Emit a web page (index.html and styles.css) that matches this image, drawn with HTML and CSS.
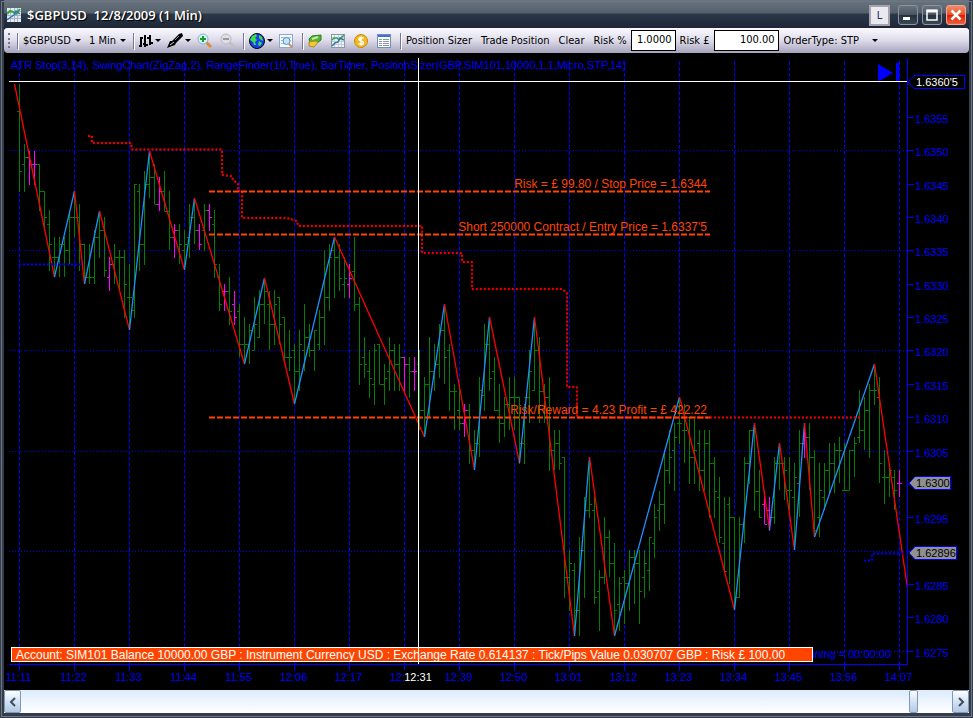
FILE: index.html
```html
<!DOCTYPE html>
<html lang="en">

<head>
    <meta charset="utf-8">
    <title>$GBPUSD 12/8/2009 (1 Min)</title>
    <link rel="stylesheet" href="styles.css">
</head>

<body>
    <div class="window">
        <header class="titlebar">
            <svg class="app-icon" width="14" height="14" viewBox="0 0 14 14">
                <rect width="14" height="14" fill="#e4e9f2" />
                <path d="M3.5 0V14M7.5 0V14M10.5 0V14M0 3.5H14M0 7.5H14M0 10.5H14" stroke="#a9b2c4" />
                <path d="M0 6L3 3L6 4L9 6L13 1" fill="none" stroke="#2fa83a" stroke-width="2" />
                <path d="M0 12L4 9L7 7L9 3L13 6" fill="none" stroke="#3477b5" stroke-width="1.5" />
            </svg>
            <h1>$GBPUSD&nbsp; 12/8/2009 (1 Min)</h1>
            <button class="link-button">L</button>
            <div class="window-buttons">
                <button class="win" aria-label="Minimize"><svg width="18" height="18"><rect x="4" y="11" width="7" height="3" fill="#fff" /></svg></button>
                <button class="win" aria-label="Maximize"><svg width="18" height="18"><path d="M4 4.5H14V14H4Z" fill="none" stroke="#fff" stroke-width="1.5" /><path d="M3.500 5H14.500" stroke="#fff" stroke-width="3" /></svg></button>
                <button class="win close" aria-label="Close"><svg width="18" height="18"><path d="M4.500 4.500L13.500 13.500M13.500 4.500L4.500 13.500" stroke="#fff" stroke-width="2.500" /></svg></button>
            </div>
        </header>

        <div class="toolbar">
            <span class="grip"></span>
            <span class="sep"></span>
            <label class="drop symbol"><select aria-label="Symbol"><option>$GBPUSD</option></select></label>
            <label class="drop interval"><select aria-label="Interval"><option>1 Min</option></select></label>
            <span class="sep"></span>
            <button class="tool menu" aria-label="Bar style">
                <svg width="14" height="14" viewBox="0 0 14 14">
                    <path d="M2 3V13M6 1V13M11 1V11M0 12H2M2 4H4M4 10H6M6 11H9M8 4H11M11 9H14" stroke="#000" stroke-width="2" />
                </svg>
            </button>
            <button class="tool menu" aria-label="Draw">
                <svg width="16" height="16" viewBox="0 0 16 16">
                    <path d="M0 15L3 8L5 8L12 1L15 0L16 3L9 10L8 12Z" fill="#000" />
                    <path d="M3 12L7 9" stroke="#ccc" />
                    <path d="M8 7L12 3" stroke="#888" />
                </svg>
            </button>
            <button class="tool" aria-label="Zoom in">
                <svg width="16" height="16" viewBox="0 0 16 16">
                    <path d="M9 9L14 14" stroke="#e08a3c" stroke-width="3" />
                    <circle cx="6" cy="6" r="5" fill="#d9f2ef" stroke="#7fb6d8" />
                    <path d="M3 6H9M6 3V9" stroke="#1d9a35" stroke-width="2" />
                </svg>
            </button>
            <button class="tool" aria-label="Zoom out">
                <svg width="16" height="16" viewBox="0 0 16 16">
                    <path d="M9 9L14 14" stroke="#c0c0c4" stroke-width="3" />
                    <circle cx="6" cy="6" r="5" fill="#dedee4" stroke="#b9b9c0" />
                    <path d="M3 6H9" stroke="#9a9aa0" stroke-width="2" />
                </svg>
            </button>
            <span class="sep"></span>
            <button class="tool menu" aria-label="Web">
                <svg width="16" height="16" viewBox="0 0 16 16">
                    <circle cx="8" cy="8" r="7.5" fill="#1a3cf0" stroke="#000" />
                    <path d="M3 3L7 1L8 3L6 5L8 7L6 9L7 12L5 12L4 9L1 7ZM10 2L13 4L14 8L12 7L10 5ZM10 8L13 10L11 13L9 12Z" fill="#35e04a" />
                </svg>
            </button>
            <button class="tool" aria-label="Data box">
                <svg width="14" height="14" viewBox="0 0 14 14">
                    <rect x=".5" y=".5" width="13" height="13" fill="#f6f9fd" stroke="#8fa9cc" />
                    <path d="M2 3.500H12M2 6.500H12M2 9.500H6" stroke="#a8bddb" />
                    <circle cx="7.5" cy="7" r="3.500" fill="#c5e4f7" stroke="#4e93cc" />
                    <path d="M10 10L13 13" stroke="#d98b4a" stroke-width="2" />
                </svg>
            </button>
            <span class="sep"></span>
            <button class="tool" aria-label="Chart trader">
                <svg width="14" height="14" viewBox="0 0 14 14">
                    <path d="M1 5L4 2L13 1L13 6L9 9L2 9Z" fill="#4fb62f" stroke="#2e7d1c" />
                    <path d="M1 8L7 7L10 8L6 13L1 12Z" fill="#f0c93a" stroke="#b98c12" />
                    <path d="M4 5L10 3" stroke="#c9ecb4" stroke-width="2" />
                </svg>
            </button>
            <button class="tool" aria-label="Indicators">
                <svg width="14" height="14" viewBox="0 0 14 14">
                    <rect x=".5" y=".5" width="13" height="13" fill="#f2f4f8" stroke="#8a96aa" />
                    <path d="M3.500 1V13M7.500 1V13M10.500 1V13M1 3.500H13M1 7.500H13M1 10.500H13" stroke="#c3c9d6" />
                    <path d="M1 6L3 4L6 4L8 6L13 1" fill="none" stroke="#2fa83a" stroke-width="1.500" />
                    <path d="M1 12L4 9L7 8L9 4L13 6" fill="none" stroke="#3477b5" stroke-width="1.500" />
                </svg>
            </button>
            <button class="tool" aria-label="Strategies">
                <svg width="14" height="14" viewBox="0 0 14 14">
                    <circle cx="7" cy="7" r="6.500" fill="#f4b91c" stroke="#c88a0a" />
                    <path d="M9.500 4.500C8 3 4.500 3.500 5 5.500C5.500 7.500 9.500 6.500 9.500 8.800C9.500 11 6 10.800 4.500 9.500M7 2.500V11.500" fill="none" stroke="#fff" stroke-width="1.500" />
                </svg>
            </button>
            <button class="tool" aria-label="Properties">
                <svg width="14" height="14" viewBox="0 0 14 14">
                    <rect x=".5" y=".5" width="13" height="13" fill="#fff" stroke="#6d8fc4" />
                    <rect x="1" y="1" width="12" height="2" fill="#3e72d2" />
                    <path d="M2 5.500H5M2 7.500H5M2 9.500H5M2 11.500H5M6 5.500H12M6 7.500H12M6 9.500H12M6 11.500H12" stroke="#8b96aa" />
                </svg>
            </button>
            <span class="sep"></span>
            <button class="text-tool">Position Sizer</button>
            <button class="text-tool">Trade Position</button>
            <button class="text-tool">Clear</button>
            <label class="field">Risk % <input class="percent" type="text" value="1.0000"></label>
            <label class="field">Risk £ <input class="amount" type="text" value="100.00"></label>
            <label class="drop order"><select aria-label="Order type"><option>OrderType: STP</option></select></label>
        </div>

        <svg class="chart" id="chart" viewBox="4 53 965 637">
            <g id="grid"></g>
            <g id="bars"></g>
            <g id="zigzag"></g>
            <g class="stop">
                <path class="dots sell" d="M89 136L92 136V143H131L132 149.500H222V175L232 176L233 180L238 184V191H242V218H287L297 221L298 226H422V253H462V262H472V289H562L567 293V387H577V417.500H862" />
                <path class="dots buy" d="M20 264.500H84M865 560.500H872V553.500H904" />
            </g>
            <g class="levels">
                <path d="M209 191.500H710M209 234.500H710M209 417.500H710" />
                <text x="707" y="188">Risk = £ 99.80 / Stop Price = 1.6344</text>
                <text x="707" y="231">Short 250000 Contract / Entry Price = 1.6337'5</text>
                <text x="707" y="414">Risk/Reward = 4.23 Profit = £ 422.22</text>
            </g>
            <text class="studies" x="11" y="69">ATR Stop(3,14), SwingChart(ZigZag,2), RangeFinder(10,True), BarTimer, PositionSizer(GBP,SIM101,10000,1,1,Micro,STP,14)</text>
            <path class="play" d="M878 64L893 73L878 82ZM896 63H899V82H896Z" />
            <text class="timer" x="891" y="658">Time remaining = 00:00:00</text>
            <g id="axes"></g>
            <rect class="account-box" x="11.500" y="647.500" width="801" height="14" />
            <text class="account" x="16" y="659">Account: SIM101 Balance 10000.00 GBP : Instrument Currency USD : Exchange Rate 0.614137 : Tick/Pips Value 0.030707 GBP : Risk £ 100.00</text>
            <path class="cross" d="M9 81.500H907M418.500 58V664" />
            <g class="tag current">
                <path d="M908 82L914 75.500H964.500V88.500H914Z" />
                <text x="916" y="86">1.6360'5</text>
            </g>
            <g class="tag">
                <path d="M909 483L915 476.500H950.500V489.500H915Z" />
                <text x="916" y="487">1.6300</text>
            </g>
            <g class="tag">
                <path d="M909 553L915 546.500H956.500V559.500H915Z" />
                <text x="916" y="557">1.62896</text>
            </g>
            <rect class="time-box" x="404" y="670" width="28" height="14" />
            <text class="time-now" x="418" y="681">12:31</text>
        </svg>

        <div class="scrollbar">
            <button class="arrow" aria-label="Scroll left"><svg width="8" height="10"><path d="M6 1L2 5L6 9" /></svg></button>
            <div class="track"><span class="thumb"></span></div>
            <button class="arrow" aria-label="Scroll right"><svg width="8" height="10"><path d="M2 1L6 5L2 9" /></svg></button>
        </div>
    </div>
    <script src="chart.js"></script>
</body>

</html>
```
FILE: styles.css
```css
* {
    box-sizing: border-box;
    margin: 0;
    padding: 0;
}

body {
    background-color: #1d2430;
    font-family: "DejaVu Sans Condensed", "DejaVu Sans", sans-serif;
    font-size: 11px;
}

button,
select,
input {
    background: none;
    border: none;
    color: #000;
    font: inherit;
}

.window {
    background-color: #000;
    border: 4px solid #353d4c;
    border-top: none;
    border-bottom-width: 5px;
    display: flex;
    flex-direction: column;
    min-height: 100vh;
    outline: 1px solid #6d7784;
    outline-offset: -2px;
}

/* title bar */
.titlebar {
    align-items: center;
    background: linear-gradient(#69747f 0, #55616c 13px, #2c3848 14px, #1d2636 28px);
    display: flex;
    height: 28px;
    padding: 2px 3px 0;
}

.titlebar h1 {
    color: #fff;
    flex: 1;
    font-family: "Open Sans", sans-serif;
    font-size: 13px;
    font-weight: 600;
    margin-left: 6px;
    text-shadow: 1px 1px 1px #000;
    white-space: nowrap;
}

.link-button {
    background-color: #ebe9f0;
    border: 2px solid #a5a3ad;
    color: #203058;
    height: 21px;
    margin-right: 8px;
    width: 21px;
}

.window-buttons {
    display: flex;
    gap: 4px;
}

.win {
    background: linear-gradient(#68737f, #47535f 50%, #25303c 50%, #3b4754);
    border: 1px solid #8b949e;
    border-radius: 3px;
    height: 20px;
    width: 20px;
}

.win svg {
    display: block;
}

.win.close {
    background: linear-gradient(#f08a6c, #e8502c 50%, #d81f00 50%, #f0623c);
    border-color: #f0a590;
}

/* toolbar */
.toolbar {
    align-items: center;
    background: linear-gradient(#fbfaff, #dddbe9 50%, #a5a3bb);
    border-radius: 3px 3px 4px 4px;
    display: flex;
    height: 25px;
    padding: 0 4px;
    white-space: nowrap;
}

.grip {
    border-left: 2px dotted #77758c;
    height: 15px;
    width: 9px;
}

.sep {
    background-color: #77759a;
    box-shadow: 1px 1px 0 #fff;
    flex: none;
    height: 16px;
    margin: 0 5px 0 0;
    width: 1px;
}

.drop,
.menu {
    align-items: center;
    display: flex;
    flex: none;
    justify-content: space-between;
}

.drop::after,
.menu::after {
    border: 3px solid transparent;
    border-bottom: none;
    border-top-color: #000;
    content: "";
}

.drop select {
    appearance: none;
}

.symbol {
    margin-right: 8px;
    width: 58px;
}

.interval {
    margin-right: 7px;
    width: 37px;
}

.tool {
    flex: none;
    height: 20px;
    margin-right: 7px;
    width: 16px;
}

.tool svg {
    display: block;
}

.tool.menu {
    gap: 2px;
    margin-right: 6px;
    width: auto;
}

.text-tool {
    margin-right: 9px;
}

.field {
    align-items: center;
    display: flex;
    gap: 4px;
    margin-right: 4px;
}

.field input {
    background-color: #fff;
    border: 1px solid #000;
    height: 21px;
    padding: 0 3px 2px;
    text-align: right;
}

.percent {
    width: 45px;
}

.amount {
    width: 65px;
}

.order {
    margin-left: 1px;
    width: 94px;
}

/* chart */
.chart {
    display: block;
    font-family: "Liberation Sans", Arial, sans-serif;
    font-size: 11px;
    width: 100%;
}

.grid-v {
    stroke: #00f;
    stroke-dasharray: 4 2;
}

.grid-h {
    stroke: #00f;
    stroke-dasharray: 1 2;
}

.bar {
    fill: none;
    stroke: #008000;
}

.bar.inside {
    stroke: #f0f;
}

.up,
.down {
    stroke-width: 1.3;
}

.up {
    stroke: #1e90ff;
}

.down {
    stroke: #f00;
}

.dots {
    fill: none;
    stroke-dasharray: 0 4;
    stroke-linecap: round;
    stroke-width: 2.5;
}

.sell {
    stroke: #e00000;
}

.buy {
    stroke: #0000d8;
}

.levels path {
    stroke: #ff4500;
    stroke-dasharray: 6 2;
    stroke-width: 2;
}

.levels text {
    fill: #ff4500;
    font-size: 12px;
    text-anchor: end;
}

.studies,
.timer,
.scale {
    fill: #00f;
}

.timer {
    text-anchor: end;
}

.time,
.time-now {
    text-anchor: middle;
}

.axis {
    fill: none;
    stroke: #00f;
}

.play {
    fill: #00f;
}

.account-box {
    fill: #ff4500;
    stroke: #fff;
}

.account {
    fill: #fff;
    font-size: 12px;
}

.cross {
    stroke: #fff;
}

.tag path {
    fill: #909090;
    stroke: #00f;
}

.tag.current path {
    fill: #000;
}

.tag.current text,
.time-now {
    fill: #fff;
}

/* scrollbar */
.scrollbar {
    background: linear-gradient(#dcebfd, #fff);
    display: flex;
    height: 23px;
}

.arrow,
.thumb {
    background: linear-gradient(#fff, #dbe8f6 40%, #b3c9e4);
    border: 1px solid #7f98b8;
    border-radius: 2px;
}

.arrow {
    width: 17px;
}

.arrow svg {
    display: block;
    margin: 0 auto;
}

.arrow path {
    fill: none;
    stroke: #3f4c62;
    stroke-width: 2;
}

.track {
    display: flex;
    flex: 1;
    justify-content: flex-end;
    padding-right: 34px;
}

.thumb {
    width: 9px;
}
```
FILE: chart.js
```js
const SVG = 'http://www.w3.org/2000/svg';

// high, low, open, close (as y positions), 1 = inside bar
const bars = [
    [84, 192, 111, 171], [144, 192, 164, 157], [151, 185, 157, 164, 1], [151, 185, 164, 164, 1],
    [164, 211, 164, 191], [191, 231, 191, 217], [210, 271, 224, 244], [237, 277, 257, 257],
    [237, 277, 257, 244], [237, 277, 244, 250], [211, 264, 250, 217], [191, 237, 217, 217],
    [204, 271, 217, 244], [244, 284, 244, 277], [244, 284, 277, 277], [230, 284, 277, 237],
    [211, 258, 237, 230], [217, 277, 230, 270], [257, 291, 277, 264, 1], [244, 284, 264, 257],
    [250, 291, 257, 257], [250, 318, 257, 284], [264, 330, 297, 297], [184, 318, 310, 184],
    [184, 271, 191, 244], [171, 265, 244, 184], [151, 198, 184, 177], [164, 204, 177, 204],
    [177, 211, 204, 191, 1], [171, 211, 191, 211], [191, 250, 211, 237], [224, 258, 237, 230, 1],
    [224, 264, 230, 244], [230, 270, 250, 244], [204, 258, 237, 217], [198, 244, 217, 230],
    [224, 250, 230, 244, 1], [204, 251, 230, 210], [204, 231, 210, 217, 1], [210, 278, 224, 264],
    [264, 311, 277, 304], [284, 311, 291, 291, 1], [277, 325, 291, 311], [291, 325, 304, 317, 1],
    [304, 357, 311, 344], [317, 364, 344, 344], [324, 364, 344, 330], [297, 350, 350, 324],
    [290, 338, 337, 304], [278, 324, 304, 291], [291, 350, 304, 324], [290, 345, 324, 304],
    [297, 344, 297, 324], [317, 364, 317, 357], [330, 371, 357, 357], [344, 404, 350, 371],
    [330, 391, 371, 344], [304, 371, 350, 337], [324, 357, 337, 350], [330, 371, 350, 330],
    [310, 350, 344, 317], [250, 345, 317, 297], [244, 311, 297, 257], [237, 298, 250, 257],
    [244, 291, 257, 278], [257, 298, 284, 278], [264, 298, 284, 278, 1], [237, 311, 271, 304],
    [297, 385, 304, 364], [337, 378, 357, 364], [350, 398, 371, 378], [344, 405, 384, 350],
    [344, 384, 344, 384], [364, 405, 384, 378], [337, 391, 371, 350], [344, 391, 350, 364],
    [344, 391, 364, 357], [357, 391, 357, 364, 1], [357, 398, 364, 371], [357, 391, 371, 371, 1],
    [350, 430, 364, 410], [377, 437, 410, 384], [337, 417, 384, 371], [344, 391, 371, 364],
    [324, 378, 364, 330], [304, 384, 330, 357], [344, 411, 350, 391], [384, 430, 391, 391],
    [384, 430, 410, 423], [404, 437, 423, 410, 1], [404, 464, 410, 450], [430, 470, 450, 443],
    [377, 457, 443, 390], [324, 411, 395, 344], [317, 391, 344, 378], [357, 411, 371, 410],
    [384, 443, 410, 423], [397, 437, 423, 404], [377, 430, 404, 397], [377, 430, 397, 397],
    [397, 464, 397, 443], [404, 464, 443, 397], [350, 423, 397, 371], [317, 391, 390, 350],
    [337, 423, 350, 391], [384, 423, 391, 397], [377, 471, 397, 450], [430, 470, 450, 443],
    [430, 470, 443, 463], [457, 598, 457, 577], [550, 611, 577, 563], [563, 636, 570, 610],
    [537, 636, 610, 550], [497, 598, 550, 510], [457, 518, 510, 504], [497, 604, 510, 597],
    [570, 631, 591, 577], [517, 584, 577, 537], [530, 577, 537, 563], [543, 636, 563, 610],
    [577, 631, 604, 583], [570, 624, 577, 583], [550, 611, 583, 557], [550, 604, 557, 563],
    [550, 624, 563, 591], [550, 598, 577, 563], [537, 591, 570, 537], [504, 558, 543, 517],
    [491, 531, 510, 504], [450, 524, 504, 470], [430, 484, 470, 457], [423, 491, 450, 437],
    [397, 444, 423, 423], [404, 463, 430, 430], [417, 484, 417, 457], [417, 484, 457, 450],
    [430, 491, 443, 470], [430, 491, 470, 443], [430, 518, 443, 463], [457, 518, 463, 491],
    [477, 543, 497, 537], [497, 571, 543, 571], [497, 584, 504, 517], [517, 610, 517, 597],
    [517, 598, 597, 524], [457, 543, 524, 463], [430, 484, 463, 430], [423, 511, 430, 491],
    [470, 518, 491, 517], [491, 524, 504, 524, 1], [497, 531, 510, 517, 1], [457, 524, 517, 463],
    [443, 490, 463, 463], [457, 500, 463, 470], [457, 510, 490, 490], [463, 550, 497, 477],
    [430, 517, 483, 443], [423, 458, 443, 437, 1], [423, 490, 437, 457], [450, 537, 457, 530],
    [463, 537, 517, 490], [463, 510, 497, 470], [443, 493, 470, 463], [443, 493, 463, 450],
    [437, 483, 450, 450], [443, 491, 490, 490], [450, 490, 490, 450], [437, 477, 450, 443],
    [390, 443, 437, 430], [397, 450, 430, 410], [384, 458, 410, 390], [364, 405, 390, 390],
    [377, 483, 397, 463], [450, 504, 477, 477], [463, 497, 477, 470], [470, 510, 477, 490],
    [470, 497, 483, 483, 1]
];

const swings = [
    [14, 84], [54, 277], [74, 191], [84, 284], [99, 211], [129, 330], [149, 151], [184, 270],
    [194, 198], [244, 364], [264, 278], [294, 404], [334, 237], [424, 437], [444, 304],
    [474, 470], [489, 317], [519, 463], [534, 317], [574, 636], [589, 457], [614, 636],
    [679, 397], [734, 610], [754, 423], [769, 530], [779, 443], [794, 550], [804, 423],
    [814, 537], [874, 364], [907, 588]
];

const times = ['11:11', '11:22', '11:33', '11:44', '11:55', '12:06', '12:17', '12:28', '12:39',
    '12:50', '13:01', '13:12', '13:23', '13:34', '13:45', '13:56', '14:07'];

function addPath(group, className, d) {
    const path = document.createElementNS(SVG, 'path');
    path.setAttribute('class', className);
    path.setAttribute('d', d);
    document.getElementById(group).appendChild(path);
}

function addText(className, x, y, value) {
    const text = document.createElementNS(SVG, 'text');
    text.setAttribute('class', className);
    text.setAttribute('x', x);
    text.setAttribute('y', y);
    text.textContent = value;
    document.getElementById('axes').appendChild(text);
}

// Axes and time scale
addPath('axes', 'axis', 'M907.5 58V664M9 664.5H908');
times.forEach((time, i) => {
    const x = 19.5 + i * 55;
    addPath('grid', 'grid-v', `M${x} 61V664`);
    addPath('axes', 'axis', `M${x} 664V671`);
    addText('scale time', x - 1, 681, time);
});

// Price scale, one step is 5 pips
for (let i = 0; i <= 16; i++) {
    const y = Math.round(118 + i * 33.35) - 0.5;
    addPath('axes', 'axis', `M908 ${y}H914`);
    if (i % 3 === 1) {
        addPath('grid', 'grid-h', `M9 ${y}H907`);
    }
    // these two are covered by the price tags
    if (i !== 11 && i !== 13) {
        addText('scale', 915, y + 5.5, (1.6355 - i * 0.0005).toFixed(4));
    }
}

// Price bars
bars.forEach(([high, low, open, close, inside], i) => {
    const x = 19.5 + i * 5;
    addPath('bars', inside ? 'bar inside' : 'bar',
        `M${x} ${high}V${low}M${x - 2.5} ${open + 0.5}H${x}M${x} ${close + 0.5}H${x + 2.5}`);
});

// Swing lines
for (let i = 1; i < swings.length; i++) {
    const [x1, y1] = swings[i - 1];
    const [x2, y2] = swings[i];
    addPath('zigzag', y2 > y1 ? 'down' : 'up', `M${x1 + 0.5} ${y1}L${x2 + 0.5} ${y2}`);
}
```
